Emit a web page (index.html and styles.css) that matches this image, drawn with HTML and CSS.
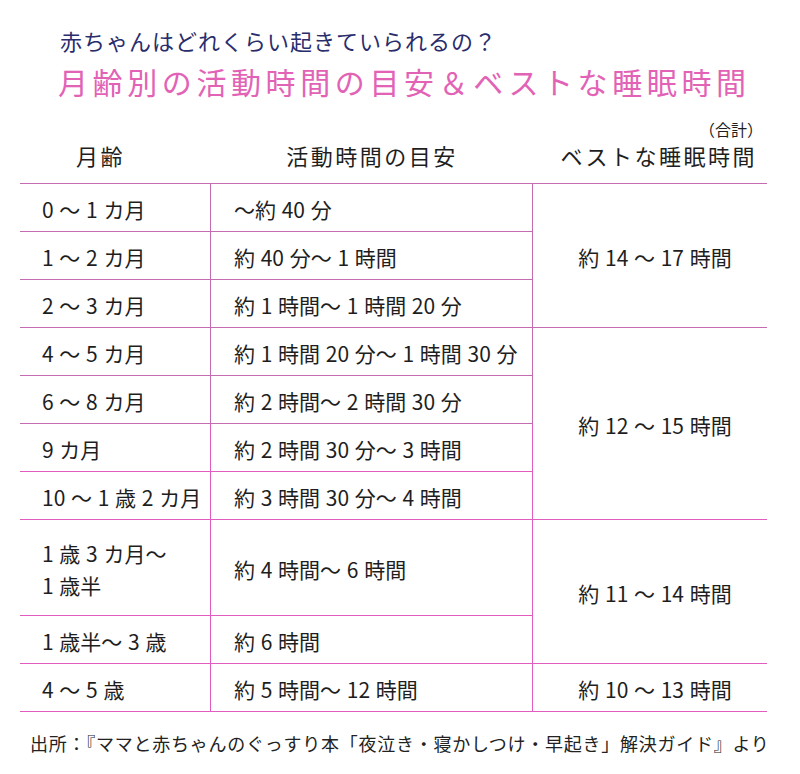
FILE: index.html
```html
<!DOCTYPE html>
<html lang="ja">
<head>
<meta charset="utf-8">
<title>月齢別の活動時間の目安＆ベストな睡眠時間</title>
<link rel="stylesheet" href="styles.css">
</head>
<body>
<div class="page">
  <p class="sub">赤ちゃんはどれくらい起きていられるの？</p>
  <h1 class="title">月齢別の活動時間の目安＆ベストな睡眠時間</h1>

  <div class="head">
    <div class="hcell hcell-first">月齢</div>
    <div class="hcell">活動時間の目安</div>
    <div class="hcell hcell-last">
      <span class="note">（合計）</span>
      <span class="htext">ベストな睡眠時間</span>
    </div>
  </div>

  <div class="grid">
    <div class="c c1 up">0 ～ 1 カ月</div>
    <div class="c c2 up">～約 40 分</div>
    <div class="c c3 up span3">約 14 ～ 17 時間</div>

    <div class="c c1 up">1 ～ 2 カ月</div>
    <div class="c c2 up">約 40 分～ 1 時間</div>

    <div class="c c1 up">2 ～ 3 カ月</div>
    <div class="c c2 up">約 1 時間～ 1 時間 20 分</div>

    <div class="c c1 up">4 ～ 5 カ月</div>
    <div class="c c2 up">約 1 時間 20 分～ 1 時間 30 分</div>
    <div class="c c3 span4">約 12 ～ 15 時間</div>

    <div class="c c1 up">6 ～ 8 カ月</div>
    <div class="c c2 up">約 2 時間～ 2 時間 30 分</div>

    <div class="c c1">9 カ月</div>
    <div class="c c2">約 2 時間 30 分～ 3 時間</div>

    <div class="c c1">10 ～ 1 歳 2 カ月</div>
    <div class="c c2">約 3 時間 30 分～ 4 時間</div>

    <div class="c c1 tall"><span>1 歳 3 カ月～<br>1 歳半</span></div>
    <div class="c c2 tall">約 4 時間～ 6 時間</div>
    <div class="c c3 span3">約 11 ～ 14 時間</div>

    <div class="c c1">1 歳半～ 3 歳</div>
    <div class="c c2">約 6 時間</div>

    <div class="c c1">4 ～ 5 歳</div>
    <div class="c c2">約 5 時間～ 12 時間</div>
    <div class="c c3">約 10 ～ 13 時間</div>
  </div>

  <p class="source">出所：『ママと赤ちゃんのぐっすり本「夜泣き・寝かしつけ・早起き」解決ガイド』より</p>
</div>
</body>
</html>
```

FILE: styles.css
```css
html, body {
  margin: 0;
  padding: 0;
  background: #ffffff;
}

body {
  font-family: "Noto Sans CJK JP", "Noto Sans", sans-serif;
  color: #1e1e1e;
}

.page {
  width: 800px;
  height: 774px;
  overflow: hidden;
}

.sub {
  margin: 0;
  padding: 26px 0 0 60px;
  font-size: 22px;
  line-height: 28px;
  letter-spacing: 1px;
  color: #2a2d6c;
  font-weight: 400;
}

.title {
  margin: 7px 0 0 58px;
  font-size: 30px;
  line-height: 40px;
  letter-spacing: 4.6px;
  color: #e262b6;
  font-weight: 400;
}

.head {
  margin-left: 20px;
  width: 747px;
  height: 82px;
  display: grid;
  grid-template-columns: 191px 322px 234px;
}

.hcell {
  display: flex;
  flex-direction: column;
  align-items: center;
  justify-content: flex-end;
  padding-bottom: 14px;
  font-size: 22px;
  line-height: 28px;
  letter-spacing: 2.5px;
  box-sizing: border-box;
}

.hcell-first {
  padding-right: 30px;
}

.hcell-last {
  align-items: flex-end;
  padding-right: 10px;
}

.note {
  display: block;
  font-size: 16px;
  line-height: 18px;
  letter-spacing: 0;
  margin-bottom: 3px;
  margin-right: -6px;
}

.grid {
  margin-left: 20px;
  width: 747px;
  display: grid;
  grid-template-columns: 191px 322px 234px;
  grid-auto-rows: 48px;
  border-top: 1px solid #c56cb0;
}

.c {
  display: flex;
  align-items: center;
  box-sizing: border-box;
  border-bottom: 1px solid #e05cbe;
  font-size: 21px;
  line-height: 32px;
  padding-top: 3px;
  word-spacing: 1px;
  white-space: nowrap;
}

.c.up {
  border-bottom-color: #c56cb0;
}

.c1 {
  grid-column: 1;
  padding-left: 22px;
  border-right: 1px solid #e05cbe;
}

.c2 {
  grid-column: 2;
  padding-left: 23px;
  border-right: 1px solid #e05cbe;
}

.c1.up, .c2.up {
  border-right-color: #c56cb0;
}

.c3 {
  grid-column: 3;
  justify-content: center;
  padding-left: 10px;
}

.span3 {
  grid-row: span 3;
}

.span4 {
  grid-row: span 4;
}

.tall {
  grid-row: span 2;
}

.span3.up {
  border-bottom-color: #c56cb0;
}

.source {
  margin: 17px 0 0 30px;
  font-size: 18px;
  line-height: 28px;
  letter-spacing: 0.75px;
  color: #222222;
  white-space: nowrap;
}
```
